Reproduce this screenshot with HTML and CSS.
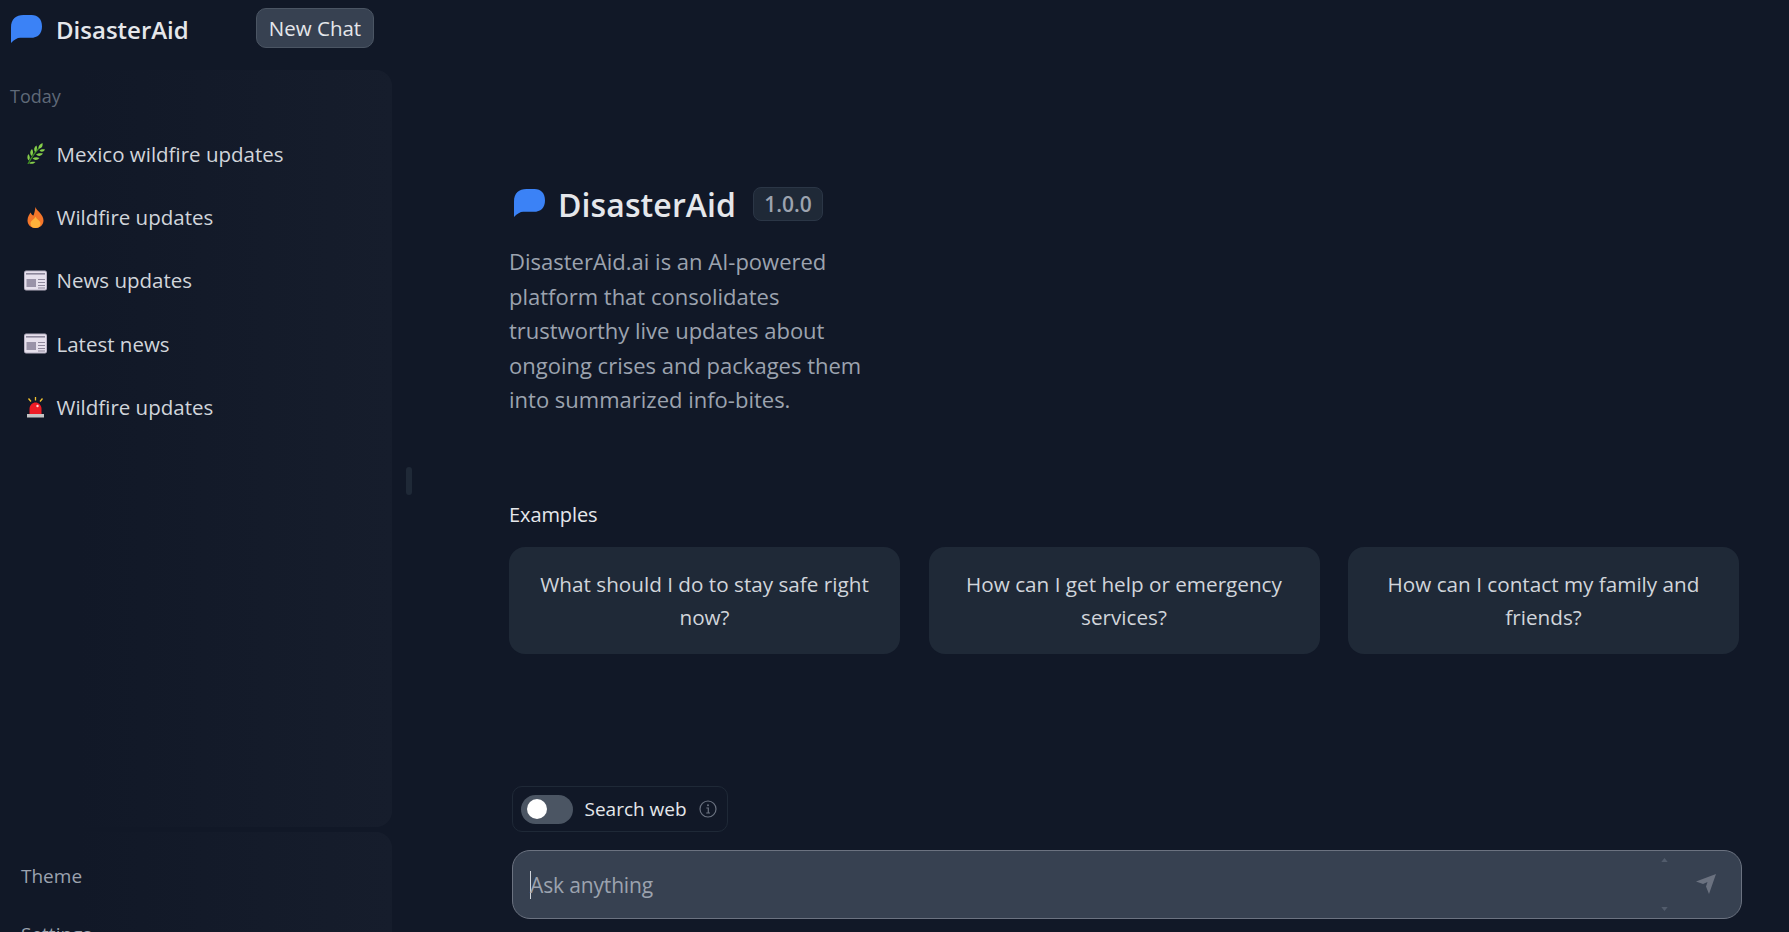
FILE: index.html
```html
<!DOCTYPE html>
<html lang="en">
<head>
<meta charset="utf-8">
<title>DisasterAid</title>
<link rel="stylesheet" href="styles.css">
</head>
<body>
<svg class="defs" width="0" height="0" aria-hidden="true">
  <defs>
    <symbol id="bubble" viewBox="0 0 30 27">
      <path d="M12 0H20C26 0 30 4 30 11C30 18 26 22 19 22H9C6 22 3 24 0 27V12C0 4 5 0 12 0Z" fill="#3b82f6"/>
    </symbol>
    <symbol id="news" viewBox="0 0 23 20">
      <rect x="0.5" y="0.5" width="22" height="19" rx="1.5" fill="#e6e0ec" stroke="#b9b2c4"/>
      <rect x="2" y="2.500" width="19" height="1.600" fill="#8d879b"/>
      <rect x="2.500" y="8.500" width="9.500" height="8" fill="#9a93a8"/>
      <path d="M14 9h7M14 12h7M14 15h7M14 17.500h7" stroke="#8f889c" stroke-width="1.100"/>
    </symbol>
  </defs>
</svg>
<div class="app">
  <aside class="sidebar">
    <header class="brand">
      <svg class="brand-logo"><use href="#bubble"/></svg>
      <span class="brand-name">DisasterAid</span>
      <button class="new-chat">New Chat</button>
    </header>
    <nav class="panel history">
      <div class="day">Today</div>
      <ul class="chats">
        <li class="chat">
          <svg class="emoji" viewBox="0 0 23 21"><path d="M4 21C7 15 11 9 17 3" fill="none" stroke="#3e8e22" stroke-width="1.300"/><g fill="#86cf4a"><path d="M14.500 5.500C14 3 16 1 18.500 0C19 3 18 5.500 14.500 5.500Z"/><path d="M11 9C9.500 6.500 10 4 12.500 2.500C13.500 5 13 7.500 11 9Z"/><path d="M7.500 13C5.500 10.500 6 8 8 6C9.500 8.500 9.500 11 7.500 13Z"/><path d="M4.500 17.500C3 15.500 3 13 4.500 11C6 13.500 6.500 15.500 4.500 17.500Z"/><path d="M15.500 7.500C17 6 19 6 21 6.500C19.500 9 17.500 9.500 15.500 7.500Z"/><path d="M12 11.500C14 10 16.500 10 19 10.500C17 13.500 14 13.500 12 11.500Z"/><path d="M8.500 15.500C10.500 14 13 14 15.500 15C13.500 17.500 10.500 17.500 8.500 15.500Z"/><path d="M5 20C7 18.500 9.500 18.500 11.500 19C9.500 21 7 21.500 5 20Z"/></g></svg>
          <span>Mexico wildfire updates</span>
        </li>
        <li class="chat">
          <svg class="emoji" viewBox="0 0 23 21"><path d="M11.500 0C12.500 4 19.500 7 19.500 13.500C19.500 18 16 21 11.500 21C7 21 3.500 18 3.500 13.500C3.500 9.500 5.500 7.500 6.500 5.500C7.500 7.500 8.500 8.500 9.500 8.500C10.500 6 11 3 11.500 0Z" fill="#f4762a"/><path d="M11.500 9.500C12.500 12.500 16.500 13.500 16.500 16.500C16.500 19.500 14.500 21 11.500 21C8.500 21 6.500 19.500 6.500 16.500C6.500 13.500 10.500 12.500 11.500 9.500Z" fill="#fdb33b"/></svg>
          <span>Wildfire updates</span>
        </li>
        <li class="chat">
          <svg class="emoji"><use href="#news"/></svg>
          <span>News updates</span>
        </li>
        <li class="chat">
          <svg class="emoji"><use href="#news"/></svg>
          <span>Latest news</span>
        </li>
        <li class="chat">
          <svg class="emoji" viewBox="0 0 23 21"><path d="M11.500 0V3.500M4.500 1.500L7 4.500M18.500 1.500L16 4.500" stroke="#f2c230" stroke-width="1.300" fill="none"/><path d="M5.500 17V12C5.500 8 8.500 5.500 11.500 5.500C14.500 5.500 17.500 8 17.500 12V17Z" fill="#ee1c25"/><circle cx="13.500" cy="9" r="1.200" fill="#ffd9d9"/><rect x="3" y="17" width="17" height="3.500" fill="#c4c4c4"/></svg>
          <span>Wildfire updates</span>
        </li>
      </ul>
    </nav>
    <nav class="panel footer">
      <div class="foot-item">Theme</div>
      <div class="foot-item">Settings</div>
    </nav>
  </aside>
  <div class="handle-col"><div class="handle"></div></div>
  <main class="main">
    <section class="intro">
      <h1 class="title">
        <svg class="title-logo"><use href="#bubble"/></svg>
        <span>DisasterAid</span>
        <span class="version">1.0.0</span>
      </h1>
      <p class="about">DisasterAid.ai is an AI-powered platform that consolidates trustworthy live updates about ongoing crises and packages them into summarized info-bites.</p>
    </section>
    <section class="examples">
      <h2 class="examples-label">Examples</h2>
      <div class="cards">
        <button class="card">What should I do to stay safe right now?</button>
        <button class="card">How can I get help or emergency services?</button>
        <button class="card">How can I contact my family and friends?</button>
      </div>
    </section>
    <section class="composer">
      <div class="search-toggle">
        <span class="switch"><span class="knob"></span></span>
        <span class="search-label">Search web</span>
        <svg class="info" viewBox="0 0 18 18"><circle cx="9" cy="9" r="8" fill="none" stroke="#6b7280" stroke-width="1.200"/><circle cx="9" cy="5.200" r="1" fill="#6b7280"/><path d="M7.300 8H9.300V12.800M7.200 13H11" fill="none" stroke="#6b7280" stroke-width="1.200"/></svg>
      </div>
      <div class="input">
        <span class="caret"></span>
        <span class="placeholder">Ask anything</span>
        <span class="spin">
          <svg viewBox="0 0 8 5"><path d="M4 0L8 5H0Z" fill="#525c6c"/></svg>
          <svg viewBox="0 0 8 5"><path d="M0 0H8L4 5Z" fill="#525c6c"/></svg>
        </span>
        <svg class="send" viewBox="0 0 20 20"><path d="M20 0L13 20L10 12.500L11.500 8L7 10L0 7.500Z" fill="#6b7280"/></svg>
      </div>
    </section>
  </main>
</div>
</body>
</html>
```

FILE: styles.css
```css
* { box-sizing: border-box; }

html, body {
  margin: 0;
  height: 100%;
  overflow: hidden;
  background: #111827;
  font-family: "Open Sans", "Noto Sans", sans-serif;
  color: #e5e7eb;
}

.defs { position: absolute; }

.app {
  display: flex;
  height: 932px;
  overflow: hidden;
}

/* Sidebar */
.sidebar {
  width: 392px;
  flex: none;
  display: flex;
  flex-direction: column;
  height: 932px;
  overflow: hidden;
}

.brand {
  display: flex;
  align-items: center;
  height: 70px;
  padding: 0 0 10px 11px;
  flex: none;
}

.brand-logo { width: 31px; height: 28px; margin-top: -2px; flex: none; }

.brand-name {
  margin-left: 14px;
  margin-top: -2px;
  width: 200px;
  flex: none;
  font-size: 24px;
  font-weight: 600;
  color: #e5e7eb;
}

.new-chat {
  width: 118px;
  height: 40px;
  flex: none;
  margin-top: -4px;
  padding: 0;
  border: 1px solid #4b5563;
  border-radius: 10px;
  background: #374151;
  color: #e5e7eb;
  font: inherit;
  font-size: 20.5px;
}

.panel {
  border-radius: 16px;
  background: linear-gradient(90deg, #111827 20%, #161d2c 100%);
}

.history {
  height: 757px;
  flex: none;
  padding-top: 11px;
}

.day {
  height: 30px;
  padding-left: 10px;
  font-size: 18px;
  line-height: 30px;
  color: #5f6978;
}

.chats {
  list-style: none;
  margin: 11px 0 0;
  padding: 0;
}

.chat {
  display: flex;
  align-items: center;
  height: 63.400px;
  padding-left: 24px;
  font-size: 20.500px;
  color: #d1d5db;
}

.emoji {
  width: 23px;
  height: 21px;
  margin-right: 9.500px;
  flex: none;
}

.footer {
  margin-top: 5px;
  height: 120px;
  flex: none;
  padding-top: 29px;
}

.foot-item {
  height: 58px;
  padding-left: 21px;
  font-size: 19px;
  line-height: 30px;
  color: #9ca3af;
}

/* Drag handle */
.handle-col {
  width: 117px;
  flex: none;
  padding: 467px 0 0 14px;
}

.handle {
  width: 6px;
  height: 28px;
  border-radius: 3px;
  background: #1f2937;
}

/* Main column */
.main {
  flex: 1;
  min-width: 0;
  padding-right: 47px;
}

.intro { padding-top: 182px; height: 490px; }

.title {
  display: flex;
  align-items: center;
  height: 44px;
  margin: 0 0 0 5px;
  font-size: 32px;
  font-weight: 600;
  letter-spacing: 0.1px;
  color: #e5e7eb;
}

.title-logo { width: 31px; height: 28px; margin-right: 13px; margin-top: -2px; flex: none; }

.version {
  margin-left: 17px;
  width: 70px;
  height: 34px;
  border: 1px solid #2b3646;
  border-radius: 8px;
  background: #1f2937;
  color: #9ca3af;
  font-size: 21px;
  letter-spacing: 0;
  line-height: 33px;
  text-align: center;
}

.about {
  width: 370px;
  margin: 18px 0 0;
  font-size: 22px;
  line-height: 34.500px;
  color: #9ca3af;
}

.examples-label {
  margin: 0;
  height: 57px;
  padding-top: 10px;
  font-size: 20px;
  line-height: 30px;
  font-weight: 400;
  letter-spacing: -0.1px;
  color: #e5e7eb;
}

.cards {
  display: grid;
  grid-template-columns: repeat(3, 391px);
  gap: 28.500px;
}

.card {
  height: 107px;
  padding: 0 20px;
  border: 0;
  border-radius: 16px;
  background: #1f2937;
  color: #d1d5db;
  font: inherit;
  font-size: 20.700px;
  line-height: 33px;
}

/* Composer */
.composer { margin-top: 132px; margin-left: 3px; width: 1230px; }

.search-toggle {
  display: inline-flex;
  align-items: center;
  width: 216px;
  height: 46px;
  padding-left: 8px;
  border: 1px solid #1f2937;
  border-radius: 10px;
}

.switch {
  width: 52px;
  height: 29px;
  padding: 4px 6px;
  border-radius: 15px;
  background: #4b5563;
}

.knob {
  display: block;
  width: 20px;
  height: 20px;
  margin-top: 0.500px;
  border-radius: 50%;
  background: #fff;
}

.search-label {
  margin-left: 11.500px;
  font-size: 19px;
  color: #e5e7eb;
}

.info { width: 18px; height: 18px; margin-left: 12.500px; }

.input {
  position: relative;
  display: flex;
  align-items: center;
  height: 69px;
  margin-top: 18px;
  padding-left: 17px;
  border: 1px solid #6b7280;
  border-radius: 18px;
  background: #374151;
}

.caret { width: 1px; height: 28px; margin-right: -1px; background: #d1d5db; }

.placeholder {
  font-size: 21px;
  letter-spacing: -0.150px;
  color: #9ca3af;
}

.spin {
  position: absolute;
  top: 7px;
  bottom: 7px;
  right: 73px;
  display: flex;
  flex-direction: column;
  justify-content: space-between;
}

.spin svg { display: block; width: 7px; height: 4px; }

.send { position: absolute; right: 25px; top: 23px; width: 20px; height: 20px; }
```
